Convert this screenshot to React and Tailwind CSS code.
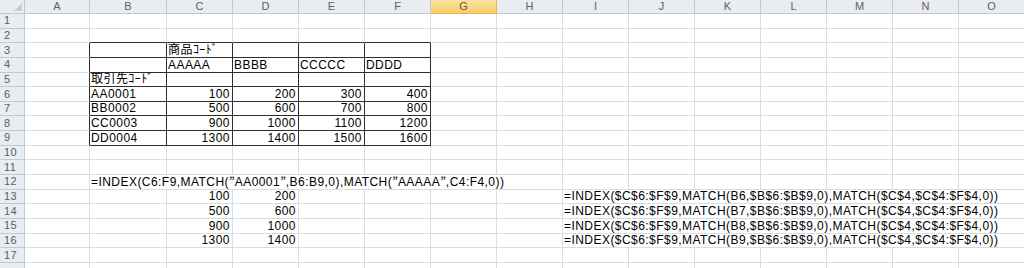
import React from 'react';

const COLS = ['A', 'B', 'C', 'D', 'E', 'F', 'G', 'H', 'I', 'J', 'K', 'L', 'M', 'N', 'O'];
const ROWS = Array.from({ length: 18 }, (_, i) => i + 1);

const Q = () => <span className="font-['Noto_Sans_CJK_JP',sans-serif] tracking-normal">”</span>;

// text cells: [value, align]
const cells = {
  C3: ['商品ｺｰﾄﾞ', 'l'],
  C4: ['AAAAA', 'l'],
  D4: ['BBBB', 'l'],
  E4: ['CCCCC', 'l'],
  F4: ['DDDD', 'l'],
  B5: ['取引先ｺｰﾄﾞ', 'l'],
  B6: ['AA0001', 'l'],
  B7: ['BB0002', 'l'],
  B8: ['CC0003', 'l'],
  B9: ['DD0004', 'l'],
  C6: ['100', 'r'], D6: ['200', 'r'], E6: ['300', 'r'], F6: ['400', 'r'],
  C7: ['500', 'r'], D7: ['600', 'r'], E7: ['700', 'r'], F7: ['800', 'r'],
  C8: ['900', 'r'], D8: ['1000', 'r'], E8: ['1100', 'r'], F8: ['1200', 'r'],
  C9: ['1300', 'r'], D9: ['1400', 'r'], E9: ['1500', 'r'], F9: ['1600', 'r'],
  C13: ['100', 'r'], D13: ['200', 'r'],
  C14: ['500', 'r'], D14: ['600', 'r'],
  C15: ['900', 'r'], D15: ['1000', 'r'],
  C16: ['1300', 'r'], D16: ['1400', 'r'],
};

// cells whose text runs over the next columns: [first col index, span, content]
const spans = {
  12: [2, 7, <>=INDEX(C6:F9,MATCH(<Q />AA0001<Q />,B6:B9,0),MATCH(<Q />AAAAA<Q />,C4:F4,0))</>],
  13: [9, 7, '=INDEX($C$6:$F$9,MATCH(B6,$B$6:$B$9,0),MATCH($C$4,$C$4:$F$4,0))'],
  14: [9, 7, '=INDEX($C$6:$F$9,MATCH(B7,$B$6:$B$9,0),MATCH($C$4,$C$4:$F$4,0))'],
  15: [9, 7, '=INDEX($C$6:$F$9,MATCH(B8,$B$6:$B$9,0),MATCH($C$4,$C$4:$F$4,0))'],
  16: [9, 7, '=INDEX($C$6:$F$9,MATCH(B9,$B$6:$B$9,0),MATCH($C$4,$C$4:$F$4,0))'],
};

const inTableRight = (r, c) => r >= 3 && r <= 9 && c >= 1 && c <= 6;
const inTableBottom = (r, c) => r >= 2 && r <= 9 && c >= 2 && c <= 6;

const Cell = ({ r, c }) => {
  const key = COLS[c - 1] + r;
  const v = cells[key];
  const right = inTableRight(r, c) ? 'border-r-[#2e2e2e]' : 'border-r-[#dadcdd]';
  const bottom = inTableBottom(r, c) ? 'border-b-[#2e2e2e]' : 'border-b-[#dadcdd]';
  return (
    <div className={`border-r border-b ${right} ${bottom} flex items-end pb-[1px] overflow-visible whitespace-nowrap ${v && v[1] === 'r' ? 'justify-end pr-[2px]' : 'justify-start pl-[1px]'}`}>
      {v ? <span className="leading-[12px]">{v[0]}</span> : null}
    </div>
  );
};

const RowCells = ({ r }) => {
  const out = [];
  const sp = spans[r];
  for (let c = 1; c <= 15; c++) {
    if (sp && c === sp[0]) {
      out.push(
        <div
          key={c}
          style={{ gridColumn: `span ${sp[1]}` }}
          className="border-r border-b border-r-[#dadcdd] border-b-[#dadcdd] flex items-end pb-[1px] pl-[1px] whitespace-nowrap"
        >
          <span className="leading-[12px]">{sp[2]}</span>
        </div>
      );
      c += sp[1] - 1;
      continue;
    }
    out.push(<Cell key={c} r={r} c={c} />);
  }
  return out;
};

export default function App() {
  return (
    <div className="w-[1024px] h-[268px] overflow-hidden bg-white">
      <div className="grid grid-cols-[25px_65px_77px_repeat(13,66px)] grid-rows-[14px_repeat(18,14.65px)] text-[12px] tracking-[0.45px] text-black font-['Liberation_Sans','Noto_Sans_CJK_JP',sans-serif]">
        {/* corner */}
        <div className="bg-[#e9ecf0] border-r border-b border-[#c3c9d1] relative">
          <svg className="absolute right-[2px] bottom-[2px]" width="8" height="8" viewBox="0 0 8 8">
            <path d="M8 0 L8 8 L0 8 Z" fill="#c6ccd3" />
          </svg>
        </div>
        {COLS.map((l) => (
          <div
            key={l}
            className={`flex items-center justify-center text-[11px] tracking-normal leading-none border-r border-b ${
              l === 'G'
                ? 'bg-gradient-to-b from-[#fbe3a3] to-[#f7cd66] border-[#e6b64c] text-[#6a5a3a]'
                : 'bg-[#e9ecf0] border-[#c3c9d1] text-[#5b5f66]'
            }`}
          >
            {l}
          </div>
        ))}
        {ROWS.map((r) => (
          <React.Fragment key={r}>
            <div className="bg-[#e9ecf0] border-r border-b border-[#c3c9d1] flex items-center pl-[4px] text-[11px] tracking-[0.5px] leading-none text-[#5b5f66]">
              {r < 18 ? r : ''}
            </div>
            <RowCells r={r} />
          </React.Fragment>
        ))}
      </div>
    </div>
  );
}
